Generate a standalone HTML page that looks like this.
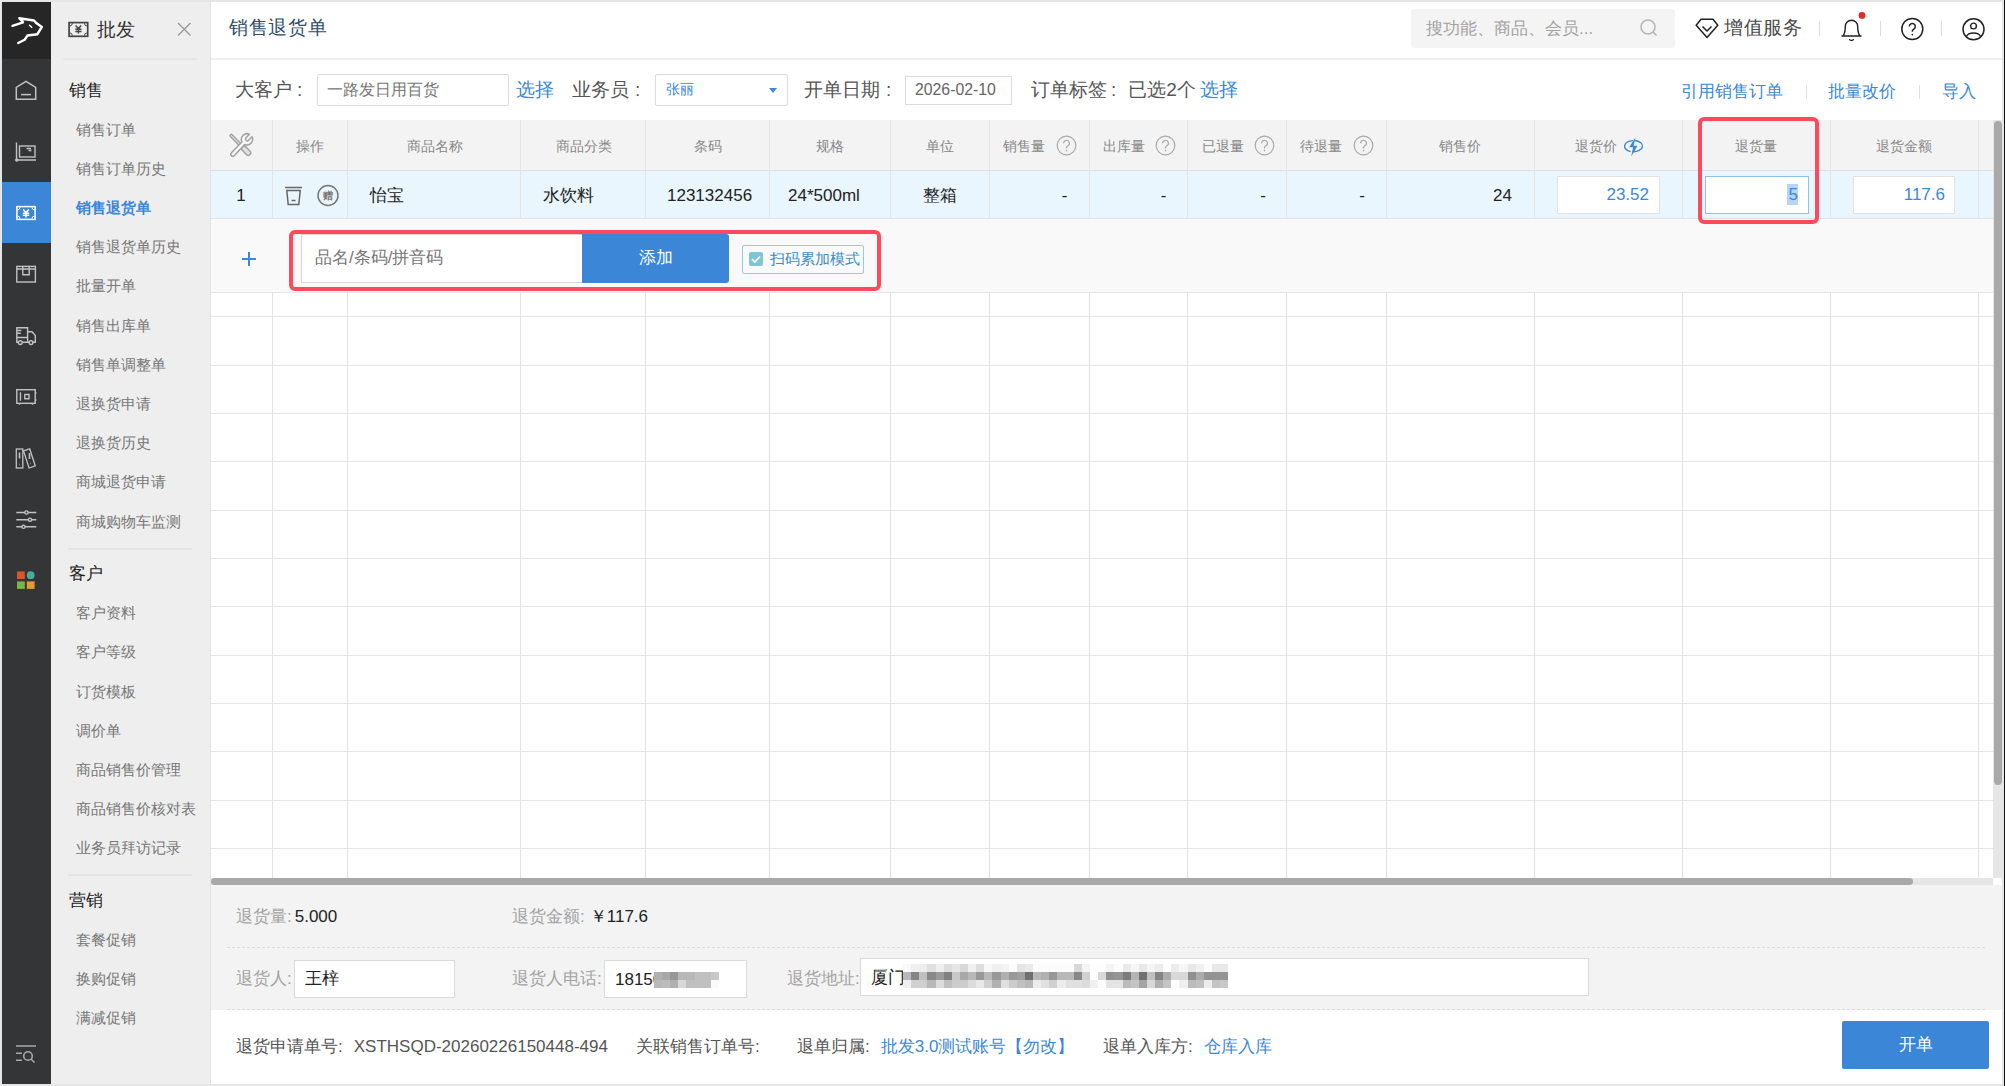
<!DOCTYPE html>
<html><head><meta charset="utf-8">
<style>
*{box-sizing:border-box;margin:0;padding:0}
html,body{width:2005px;height:1086px;overflow:hidden}
body{position:relative;background:#e6e6e6;font-family:"Liberation Sans",sans-serif;color:#333}
.a{position:absolute}
.t{position:absolute;white-space:nowrap;line-height:1}
#edge{left:2004px;top:0;width:1px;height:1086px;background:#111}
#nav{left:2px;top:2px;width:49px;height:1082px;background:#343537}
#logo{left:2px;top:2px;width:49px;height:57px;background:#272626}
#act{left:2px;top:182px;width:49px;height:61px;background:#3b86d6}
#side{left:51px;top:2px;width:160px;height:1082px;background:#eeeeee}
#main{left:211px;top:2px;width:1791px;height:1082px;background:#fff}
.sep{position:absolute;height:2px;background:#e3e3e3}
.s-h{font-size:17px;color:#222}
.s-i{font-size:14.5px;color:#777}
.hd{background:#f3f3f3}
.vl{position:absolute;width:1px;background:#e2e2e2}
.hl{position:absolute;height:1px;background:#e6e6e6}
.blue{color:#3b88d8}
i{position:absolute;display:block}
</style></head><body>
<div class="a" id="edge"></div>
<div class="a" id="nav"></div>
<div class="a" id="logo"></div>
<div class="a" id="act"></div>
<div class="a" id="side"></div>
<div class="a" id="main"></div>

<!-- secondary sidebar -->
<div class="t" style="left:97px;top:20px;font-size:19px;color:#333">批发</div>
<div class="sep" style="left:63px;top:58px;width:134px;height:1.5px;background:#e6e6e6"></div>
<div class="t s-h" style="left:69px;top:82px">销售</div>
<div class="t s-i" style="left:76px;top:123px">销售订单</div>
<div class="t s-i" style="left:76px;top:162px">销售订单历史</div>
<div class="t s-i" style="left:76px;top:201px;color:#3b88d8;font-weight:bold">销售退货单</div>
<div class="t s-i" style="left:76px;top:240px">销售退货单历史</div>
<div class="t s-i" style="left:76px;top:279px">批量开单</div>
<div class="t s-i" style="left:76px;top:319px">销售出库单</div>
<div class="t s-i" style="left:76px;top:358px">销售单调整单</div>
<div class="t s-i" style="left:76px;top:397px">退换货申请</div>
<div class="t s-i" style="left:76px;top:436px">退换货历史</div>
<div class="t s-i" style="left:76px;top:475px">商城退货申请</div>
<div class="t s-i" style="left:76px;top:515px">商城购物车监测</div>
<div class="sep" style="left:68px;top:548px;width:124px;height:1.5px"></div>
<div class="t s-h" style="left:69px;top:565px">客户</div>
<div class="t s-i" style="left:76px;top:606px">客户资料</div>
<div class="t s-i" style="left:76px;top:645px">客户等级</div>
<div class="t s-i" style="left:76px;top:685px">订货模板</div>
<div class="t s-i" style="left:76px;top:724px">调价单</div>
<div class="t s-i" style="left:76px;top:763px">商品销售价管理</div>
<div class="t s-i" style="left:76px;top:802px">商品销售价核对表</div>
<div class="t s-i" style="left:76px;top:841px">业务员拜访记录</div>
<div class="sep" style="left:68px;top:874px;width:124px;height:1.5px"></div>
<div class="t s-h" style="left:69px;top:892px">营销</div>
<div class="t s-i" style="left:76px;top:933px">套餐促销</div>
<div class="t s-i" style="left:76px;top:972px">换购促销</div>
<div class="t s-i" style="left:76px;top:1011px">满减促销</div>

<!-- header -->
<div class="t" style="left:229px;top:18px;font-size:19px;letter-spacing:0.7px;color:#2d4d6a">销售退货单</div>
<div class="hl" style="left:211px;top:58px;width:1791px;height:2px;background:#f0f0f0"></div><div class="a" style="left:210px;top:2px;width:1px;height:1082px;background:#e3e3e3"></div>


<div class="t" style="left:235px;top:80px;font-size:19px;color:#555">大客户<span style="margin-left:5px">:</span></div>
<div class="a" style="left:317px;top:74px;width:192px;height:32px;border:1px solid #dcdcdc;border-radius:2px;background:#fff"></div>
<div class="t" style="left:327px;top:82px;font-size:16px;color:#777">一路发日用百货</div>
<div class="t blue" style="left:516px;top:80px;font-size:19px">选择</div>
<div class="t" style="left:572px;top:80px;font-size:19px;color:#555">业务员<span style="margin-left:6px">:</span></div>
<div class="a" style="left:655px;top:74px;width:133px;height:32px;border:1px solid #dcdcdc;border-radius:2px;background:#fff"></div>
<div class="t blue" style="left:666px;top:82px;font-size:14px">张丽</div>
<div class="a" style="left:769px;top:88px;width:0;height:0;border-left:4.5px solid transparent;border-right:4.5px solid transparent;border-top:5px solid #3b88d8"></div>
<div class="t" style="left:804px;top:80px;font-size:19px;color:#555">开单日期<span style="margin-left:6px">:</span></div>
<div class="a" style="left:905px;top:76px;width:107px;height:29px;border:1px solid #dcdcdc;background:#fff"></div>
<div class="t" style="left:915px;top:82px;font-size:15.8px;color:#666">2026-02-10</div>
<div class="t" style="left:1031px;top:80px;font-size:19px;color:#555">订单标签<span style="margin-left:4px;margin-right:12px">:</span>已选2个</div>
<div class="t blue" style="left:1200px;top:80px;font-size:19px">选择</div>
<div class="t blue" style="left:1681px;top:83px;font-size:17px">引用销售订单</div>
<div class="a" style="left:1806px;top:85px;width:1px;height:14px;background:#e0e0e0"></div>
<div class="t blue" style="left:1828px;top:83px;font-size:17px">批量改价</div>
<div class="a" style="left:1919px;top:85px;width:1px;height:14px;background:#e0e0e0"></div>
<div class="t blue" style="left:1942px;top:83px;font-size:17px">导入</div>

<div class="a hd" style="left:211px;top:120px;width:1782px;height:50px"></div>
<div class="a" style="left:211px;top:170px;width:1782px;height:49px;background:#e9f6fd"></div>
<div class="a" style="left:211px;top:219px;width:1782px;height:73px;background:#f9f9f9"></div>
<div class="hl" style="left:211px;top:170px;width:1782px;background:#e0e0e0"></div>
<div class="hl" style="left:211px;top:218px;width:1782px;background:#e2e2e2"></div>
<div class="hl" style="left:211px;top:292px;width:1782px;background:#e6e6e6"></div>
<div class="hl" style="left:211px;top:316px;width:1782px"></div>
<div class="hl" style="left:211px;top:365px;width:1782px"></div>
<div class="hl" style="left:211px;top:413px;width:1782px"></div>
<div class="hl" style="left:211px;top:461px;width:1782px"></div>
<div class="hl" style="left:211px;top:510px;width:1782px"></div>
<div class="hl" style="left:211px;top:558px;width:1782px"></div>
<div class="hl" style="left:211px;top:606px;width:1782px"></div>
<div class="hl" style="left:211px;top:655px;width:1782px"></div>
<div class="hl" style="left:211px;top:703px;width:1782px"></div>
<div class="hl" style="left:211px;top:751px;width:1782px"></div>
<div class="hl" style="left:211px;top:800px;width:1782px"></div>
<div class="hl" style="left:211px;top:848px;width:1782px"></div>
<div class="vl" style="left:272px;top:120px;height:99px;background:#e5e5e5"></div>
<div class="vl" style="left:272px;top:292px;height:586px"></div>
<div class="vl" style="left:347px;top:120px;height:99px;background:#e5e5e5"></div>
<div class="vl" style="left:347px;top:292px;height:586px"></div>
<div class="vl" style="left:520px;top:120px;height:99px;background:#e5e5e5"></div>
<div class="vl" style="left:520px;top:292px;height:586px"></div>
<div class="vl" style="left:645px;top:120px;height:99px;background:#e5e5e5"></div>
<div class="vl" style="left:645px;top:292px;height:586px"></div>
<div class="vl" style="left:769px;top:120px;height:99px;background:#e5e5e5"></div>
<div class="vl" style="left:769px;top:292px;height:586px"></div>
<div class="vl" style="left:890px;top:120px;height:99px;background:#e5e5e5"></div>
<div class="vl" style="left:890px;top:292px;height:586px"></div>
<div class="vl" style="left:989px;top:120px;height:99px;background:#e5e5e5"></div>
<div class="vl" style="left:989px;top:292px;height:586px"></div>
<div class="vl" style="left:1089px;top:120px;height:99px;background:#e5e5e5"></div>
<div class="vl" style="left:1089px;top:292px;height:586px"></div>
<div class="vl" style="left:1187px;top:120px;height:99px;background:#e5e5e5"></div>
<div class="vl" style="left:1187px;top:292px;height:586px"></div>
<div class="vl" style="left:1286px;top:120px;height:99px;background:#e5e5e5"></div>
<div class="vl" style="left:1286px;top:292px;height:586px"></div>
<div class="vl" style="left:1386px;top:120px;height:99px;background:#e5e5e5"></div>
<div class="vl" style="left:1386px;top:292px;height:586px"></div>
<div class="vl" style="left:1534px;top:120px;height:99px;background:#e5e5e5"></div>
<div class="vl" style="left:1534px;top:292px;height:586px"></div>
<div class="vl" style="left:1682px;top:120px;height:99px;background:#e5e5e5"></div>
<div class="vl" style="left:1682px;top:292px;height:586px"></div>
<div class="vl" style="left:1830px;top:120px;height:99px;background:#e5e5e5"></div>
<div class="vl" style="left:1830px;top:292px;height:586px"></div>
<div class="vl" style="left:1978px;top:120px;height:99px;background:#e5e5e5"></div>
<div class="vl" style="left:1978px;top:292px;height:586px"></div>
<div class="t" style="left:210.0px;width:200px;text-align:center;font-size:14px;color:#888;top:139px">操作</div>
<div class="t" style="left:334.5px;width:200px;text-align:center;font-size:14px;color:#888;top:139px">商品名称</div>
<div class="t" style="left:483.5px;width:200px;text-align:center;font-size:14px;color:#888;top:139px">商品分类</div>
<div class="t" style="left:608.0px;width:200px;text-align:center;font-size:14px;color:#888;top:139px">条码</div>
<div class="t" style="left:730.0px;width:200px;text-align:center;font-size:14px;color:#888;top:139px">规格</div>
<div class="t" style="left:840.0px;width:200px;text-align:center;font-size:14px;color:#888;top:139px">单位</div>
<div class="t" style="left:1360.0px;width:200px;text-align:center;font-size:14px;color:#888;top:139px">销售价</div>
<div class="t" style="left:1656.0px;width:200px;text-align:center;font-size:14px;color:#888;top:139px">退货量</div>
<div class="t" style="left:1804.0px;width:200px;text-align:center;font-size:14px;color:#888;top:139px">退货金额</div>
<div class="t" style="left:1003px;font-size:14px;color:#888;top:139px">销售量</div>
<svg class="a" style="left:1056px;top:135px" width="21" height="21" viewBox="0 0 21 21"><circle cx="10.5" cy="10.5" r="9.3" fill="none" stroke="#aaa" stroke-width="1.2"/><path d="M7.6 8.2a2.9 2.9 0 1 1 4.3 2.5c-.9.5-1.4 1-1.4 2v.9" fill="none" stroke="#aaa" stroke-width="1.2"/><circle cx="10.5" cy="15.6" r=".8" fill="#aaa"/></svg>
<div class="t" style="left:1102.7px;font-size:14px;color:#888;top:139px">出库量</div>
<svg class="a" style="left:1155px;top:135px" width="21" height="21" viewBox="0 0 21 21"><circle cx="10.5" cy="10.5" r="9.3" fill="none" stroke="#aaa" stroke-width="1.2"/><path d="M7.6 8.2a2.9 2.9 0 1 1 4.3 2.5c-.9.5-1.4 1-1.4 2v.9" fill="none" stroke="#aaa" stroke-width="1.2"/><circle cx="10.5" cy="15.6" r=".8" fill="#aaa"/></svg>
<div class="t" style="left:1201.5px;font-size:14px;color:#888;top:139px">已退量</div>
<svg class="a" style="left:1254px;top:135px" width="21" height="21" viewBox="0 0 21 21"><circle cx="10.5" cy="10.5" r="9.3" fill="none" stroke="#aaa" stroke-width="1.2"/><path d="M7.6 8.2a2.9 2.9 0 1 1 4.3 2.5c-.9.5-1.4 1-1.4 2v.9" fill="none" stroke="#aaa" stroke-width="1.2"/><circle cx="10.5" cy="15.6" r=".8" fill="#aaa"/></svg>
<div class="t" style="left:1300px;font-size:14px;color:#888;top:139px">待退量</div>
<svg class="a" style="left:1353px;top:135px" width="21" height="21" viewBox="0 0 21 21"><circle cx="10.5" cy="10.5" r="9.3" fill="none" stroke="#aaa" stroke-width="1.2"/><path d="M7.6 8.2a2.9 2.9 0 1 1 4.3 2.5c-.9.5-1.4 1-1.4 2v.9" fill="none" stroke="#aaa" stroke-width="1.2"/><circle cx="10.5" cy="15.6" r=".8" fill="#aaa"/></svg>
<div class="t" style="left:1575px;font-size:14px;color:#888;top:139px">退货价</div>
<svg class="a" style="left:1621px;top:136px" width="24" height="22" viewBox="0 0 24 22"><path d="M12.2 4.6A9.4 5.7 0 0 0 9.6 15.6M13.8 4.5A9.4 5.7 0 0 1 11.6 15.8" fill="none" stroke="#3b88d8" stroke-width="1.4"/><path d="M14.6 1.3 8.2 11.3h3.9L10.2 20.6 16.5 9.8h-3.9z" fill="#3b88d8"/></svg>
<svg class="a" style="left:222px;top:126px" width="40" height="40" viewBox="0 0 40 40"><g stroke="#a3a3a3" stroke-width="1.5" stroke-linejoin="round"><g transform="translate(9.3 9.6) rotate(45.6)"><path d="M0 -1.2L16 -1.2L16 1.2L0 1.2A1.2 1.2 0 0 1 0 -1.2Z" fill="#e6e6e6"/><rect x="16" y="-2.5" width="10.6" height="5" rx="2.5" fill="#e2e2e2"/></g><g transform="translate(10.7 28.4) rotate(-46.5)"><path d="M0 -1.9L15.53 -1.9A5.6 5.6 0 0 1 26.1 -1.8L21.2 -1.8A1.8 1.8 0 0 0 21.2 1.8L26.1 1.8A5.6 5.6 0 0 1 15.53 1.9L0 1.9A1.9 1.9 0 0 1 0 -1.9Z" fill="#f8f8f8"/></g></g></svg>
<div class="t" style="left:141.0px;width:200px;text-align:center;font-size:17px;color:#222;top:187px">1</div>
<div class="t" style="left:370px;font-size:17px;color:#222;top:187px">怡宝</div>
<div class="t" style="left:543px;font-size:17px;color:#222;top:187px">水饮料</div>
<div class="t" style="left:667px;font-size:17px;color:#222;top:187px">123132456</div>
<div class="t" style="left:788px;font-size:17px;color:#222;top:187px">24*500ml</div>
<div class="t" style="left:923px;font-size:17px;color:#222;top:187px">整箱</div>
<div class="t" style="left:1054.5px;width:20px;text-align:center;font-size:17px;color:#222;top:187px">-</div>
<div class="t" style="left:1153.5px;width:20px;text-align:center;font-size:17px;color:#222;top:187px">-</div>
<div class="t" style="left:1253.0px;width:20px;text-align:center;font-size:17px;color:#222;top:187px">-</div>
<div class="t" style="left:1352.0px;width:20px;text-align:center;font-size:17px;color:#222;top:187px">-</div>
<div class="t" style="left:1412px;width:100px;text-align:right;font-size:17px;color:#222;top:187px">24</div>
<svg class="a" style="left:284px;top:186px" width="19" height="20" viewBox="0 0 19 20"><g fill="none" stroke="#666" stroke-width="1.5"><path d="M1 1.5h17"/><path d="M2.8 4.5l1.4 14h10.6l1.4-14z"/><path d="M7.5 14.5h4"/></g></svg>
<svg class="a" style="left:317px;top:184px" width="22" height="23" viewBox="0 0 22 23"><circle cx="11" cy="11.5" r="10" fill="none" stroke="#777" stroke-width="1.5"/></svg>
<div class="t" style="left:323px;top:191px;font-size:10px;font-weight:bold;color:#7a7a7a">赠</div>
<div class="a" style="left:1556.5px;top:176px;width:103.0px;height:38px;background:#fff;border:1px solid #e2e2e2;"></div>
<div class="t" style="left:1548px;width:101px;text-align:right;font-size:17px;color:#3b88d8;top:186px">23.52</div>
<div class="a" style="left:1705px;top:176px;width:103.5px;height:38px;background:#fff;border:1px solid #e2e2e2;border-color:#8cc3ec"></div>
<div class="a" style="left:1787px;top:184px;width:11px;height:21px;background:#b4d5fc"></div>
<div class="t" style="left:1698px;width:100px;text-align:right;font-size:17px;color:#3b88d8;top:186px">5</div>
<div class="a" style="left:1853px;top:176px;width:102px;height:38px;background:#fff;border:1px solid #e2e2e2;"></div>
<div class="t" style="left:1845px;width:100px;text-align:right;font-size:17px;color:#3b88d8;top:186px">117.6</div>
<div class="a" style="left:1698px;top:117px;width:121px;height:107px;border:4px solid #ff4a5e;border-radius:6px"></div>
<div class="a" style="left:289px;top:230px;width:592px;height:61px;border:4px solid #ff4a5e;border-radius:6px"></div>
<div class="t" style="left:242px;top:252px;width:14px;height:14px"><div class="a" style="left:0;top:6px;width:14px;height:2px;background:#3b88d8"></div><div class="a" style="left:6px;top:0;width:2px;height:14px;background:#3b88d8"></div></div>
<div class="a" style="left:301px;top:234px;width:282px;height:49px;background:#fff;border:1px solid #d6d6d6;border-right:none"></div>
<div class="t" style="left:315px;top:249px;font-size:17px;color:#777">品名/条码/拼音码</div>
<div class="a" style="left:582px;top:234px;width:147px;height:49px;background:#3b86d6;border-radius:0 3px 3px 0"></div>
<div class="t" style="left:556.0px;width:200px;text-align:center;font-size:17px;color:#fff;top:249px">添加</div>
<div class="a" style="left:742px;top:245px;width:122px;height:29px;border:1px solid #92cde0;background:#fafafa;border-radius:2px"></div>
<div class="a" style="left:749px;top:252px;width:14px;height:14px;background:#7cc6d8;border-radius:2px"></div>
<svg class="a" style="left:749px;top:252px" width="14" height="14" viewBox="0 0 14 14"><path d="M3 7.2l2.8 2.8L11 4.5" fill="none" stroke="#fff" stroke-width="1.8"/></svg>
<div class="t" style="left:770px;top:252px;font-size:14.5px;color:#3a8dc2">扫码累加模式</div>
<div class="a" style="left:211px;top:878px;width:1782px;height:7px;background:#e6e6e6"></div>
<div class="a" style="left:211px;top:878px;width:1702px;height:7px;background:#a9a9a9;border-radius:3.5px"></div>
<div class="a" style="left:1993px;top:120px;width:9px;height:758px;background:#e6e6e6"></div>
<div class="a" style="left:1993.5px;top:121px;width:8px;height:664px;background:#a9a9a9;border-radius:4px"></div>
<div class="a" style="left:1993px;top:878px;width:9px;height:7px;background:#fff"></div>
<div class="a" style="left:211px;top:885px;width:1791px;height:125px;background:#f3f3f3"></div>
<div class="a" style="left:227px;top:947px;width:1758px;height:0;border-top:1px dashed #dcdcdc"></div>
<div class="a" style="left:227px;top:1009px;width:1758px;height:0;border-top:1px dashed #dcdcdc"></div>
<div class="t" style="left:236px;top:908px;font-size:17px;color:#a3a3a3">退货量:<span style="font-size:17px;color:#222;margin-left:3px">5.000</span></div>
<div class="t" style="left:512px;top:908px;font-size:17px;color:#a3a3a3">退货金额:<span style="font-size:17px;color:#222;margin-left:5px">￥117.6</span></div>
<div class="t" style="left:236px;top:970px;font-size:17px;color:#a3a3a3">退货人:</div>
<div class="a" style="left:294px;top:960px;width:161px;height:38px;background:#fff;border:1px solid #dadada"></div>
<div class="t" style="left:305px;top:970px;font-size:17px;color:#222">王梓</div>
<div class="t" style="left:512px;top:970px;font-size:17px;color:#a3a3a3">退货人电话:</div>
<div class="a" style="left:604px;top:960px;width:143px;height:38px;background:#fff;border:1px solid #dadada"></div>
<div class="t" style="left:615px;top:971px;font-size:17px;color:#222">18150</div><div class="a" style="left:0;top:0"><i style="left:654.00px;top:972px;width:8.40px;height:8px;background:#b0b0b0"></i><i style="left:662.10px;top:972px;width:8.40px;height:8px;background:#a8a8a8"></i><i style="left:670.20px;top:972px;width:8.40px;height:8px;background:#989898"></i><i style="left:678.30px;top:972px;width:8.40px;height:8px;background:#b8b8b8"></i><i style="left:686.40px;top:972px;width:8.40px;height:8px;background:#b8b8b8"></i><i style="left:694.50px;top:972px;width:8.40px;height:8px;background:#c0c0c0"></i><i style="left:702.60px;top:972px;width:8.40px;height:8px;background:#c0c0c0"></i><i style="left:710.70px;top:972px;width:8.40px;height:8px;background:#c8c8c8"></i><i style="left:654.00px;top:980px;width:8.40px;height:8px;background:#b8b8b8"></i><i style="left:662.10px;top:980px;width:8.40px;height:8px;background:#bcbcbc"></i><i style="left:670.20px;top:980px;width:8.40px;height:8px;background:#b0b0b0"></i><i style="left:678.30px;top:980px;width:8.40px;height:8px;background:#d8d8d8"></i><i style="left:686.40px;top:980px;width:8.40px;height:8px;background:#c0c0c0"></i><i style="left:694.50px;top:980px;width:8.40px;height:8px;background:#c0c0c0"></i><i style="left:702.60px;top:980px;width:8.40px;height:8px;background:#c0c0c0"></i><i style="left:710.70px;top:980px;width:8.40px;height:8px;background:#fafafa"></i></div>
<div class="t" style="left:787px;top:970px;font-size:17px;color:#a3a3a3">退货地址:</div>
<div class="a" style="left:860px;top:958px;width:729px;height:38px;background:#fff;border:1px solid #dadada"></div>
<div class="t" style="left:871px;top:969px;font-size:17px;color:#222">厦门</div><div class="a" style="left:0;top:0"><i style="left:903.00px;top:964px;width:8.43px;height:8px;background:#fafafa"></i><i style="left:911.13px;top:964px;width:8.43px;height:8px;background:#f0f0f0"></i><i style="left:919.26px;top:964px;width:8.43px;height:8px;background:#eeeeee"></i><i style="left:927.39px;top:964px;width:8.43px;height:8px;background:#e0e0e0"></i><i style="left:935.52px;top:964px;width:8.43px;height:8px;background:#eeeeee"></i><i style="left:943.65px;top:964px;width:8.43px;height:8px;background:#dddddd"></i><i style="left:951.78px;top:964px;width:8.43px;height:8px;background:#e6e6e6"></i><i style="left:959.91px;top:964px;width:8.43px;height:8px;background:#d8d8d8"></i><i style="left:968.04px;top:964px;width:8.43px;height:8px;background:#f0f0f0"></i><i style="left:976.17px;top:964px;width:8.43px;height:8px;background:#dddddd"></i><i style="left:984.30px;top:964px;width:8.43px;height:8px;background:#f8f8f8"></i><i style="left:992.43px;top:964px;width:8.43px;height:8px;background:#f0f0f0"></i><i style="left:1000.56px;top:964px;width:8.43px;height:8px;background:#f4f4f4"></i><i style="left:1008.69px;top:964px;width:8.43px;height:8px;background:#fcfcfc"></i><i style="left:1016.82px;top:964px;width:8.43px;height:8px;background:#e5e5e5"></i><i style="left:1024.95px;top:964px;width:8.43px;height:8px;background:#eaeaea"></i><i style="left:1033.08px;top:964px;width:8.43px;height:8px;background:#fcfcfc"></i><i style="left:1041.21px;top:964px;width:8.43px;height:8px;background:#fcfcfc"></i><i style="left:1049.34px;top:964px;width:8.43px;height:8px;background:#fcfcfc"></i><i style="left:1057.47px;top:964px;width:8.43px;height:8px;background:#fcfcfc"></i><i style="left:1065.60px;top:964px;width:8.43px;height:8px;background:#fcfcfc"></i><i style="left:1073.73px;top:964px;width:8.43px;height:8px;background:#d8d8d8"></i><i style="left:1081.86px;top:964px;width:8.43px;height:8px;background:#f4f4f4"></i><i style="left:1089.99px;top:964px;width:8.43px;height:8px;background:#fefefe"></i><i style="left:1098.12px;top:964px;width:8.43px;height:8px;background:#fefefe"></i><i style="left:1106.25px;top:964px;width:8.43px;height:8px;background:#f4f4f4"></i><i style="left:1114.38px;top:964px;width:8.43px;height:8px;background:#fcfcfc"></i><i style="left:1122.51px;top:964px;width:8.43px;height:8px;background:#eaeaea"></i><i style="left:1130.64px;top:964px;width:8.43px;height:8px;background:#f6f6f6"></i><i style="left:1138.77px;top:964px;width:8.43px;height:8px;background:#e8e8e8"></i><i style="left:1146.90px;top:964px;width:8.43px;height:8px;background:#f4f4f4"></i><i style="left:1155.03px;top:964px;width:8.43px;height:8px;background:#ececec"></i><i style="left:1163.16px;top:964px;width:8.43px;height:8px;background:#fefefe"></i><i style="left:1171.29px;top:964px;width:8.43px;height:8px;background:#ececec"></i><i style="left:1179.42px;top:964px;width:8.43px;height:8px;background:#f6f6f6"></i><i style="left:1187.55px;top:964px;width:8.43px;height:8px;background:#e8e8e8"></i><i style="left:1195.68px;top:964px;width:8.43px;height:8px;background:#f0f0f0"></i><i style="left:1203.81px;top:964px;width:8.43px;height:8px;background:#fcfcfc"></i><i style="left:1211.94px;top:964px;width:8.43px;height:8px;background:#e8e8e8"></i><i style="left:1220.07px;top:964px;width:8.43px;height:8px;background:#e8e8e8"></i><i style="left:903.00px;top:972px;width:8.43px;height:8px;background:#b8b8b8"></i><i style="left:911.13px;top:972px;width:8.43px;height:8px;background:#858585"></i><i style="left:919.26px;top:972px;width:8.43px;height:8px;background:#c0c0c0"></i><i style="left:927.39px;top:972px;width:8.43px;height:8px;background:#888888"></i><i style="left:935.52px;top:972px;width:8.43px;height:8px;background:#9a9a9a"></i><i style="left:943.65px;top:972px;width:8.43px;height:8px;background:#808080"></i><i style="left:951.78px;top:972px;width:8.43px;height:8px;background:#c8c8c8"></i><i style="left:959.91px;top:972px;width:8.43px;height:8px;background:#a8a8a8"></i><i style="left:968.04px;top:972px;width:8.43px;height:8px;background:#b8b8b8"></i><i style="left:976.17px;top:972px;width:8.43px;height:8px;background:#989898"></i><i style="left:984.30px;top:972px;width:8.43px;height:8px;background:#b8b8b8"></i><i style="left:992.43px;top:972px;width:8.43px;height:8px;background:#989898"></i><i style="left:1000.56px;top:972px;width:8.43px;height:8px;background:#b0b0b0"></i><i style="left:1008.69px;top:972px;width:8.43px;height:8px;background:#9a9a9a"></i><i style="left:1016.82px;top:972px;width:8.43px;height:8px;background:#a0a0a0"></i><i style="left:1024.95px;top:972px;width:8.43px;height:8px;background:#707070"></i><i style="left:1033.08px;top:972px;width:8.43px;height:8px;background:#b8b8b8"></i><i style="left:1041.21px;top:972px;width:8.43px;height:8px;background:#b0b0b0"></i><i style="left:1049.34px;top:972px;width:8.43px;height:8px;background:#989898"></i><i style="left:1057.47px;top:972px;width:8.43px;height:8px;background:#b8b8b8"></i><i style="left:1065.60px;top:972px;width:8.43px;height:8px;background:#b8b8b8"></i><i style="left:1073.73px;top:972px;width:8.43px;height:8px;background:#888888"></i><i style="left:1081.86px;top:972px;width:8.43px;height:8px;background:#d0d0d0"></i><i style="left:1089.99px;top:972px;width:8.43px;height:8px;background:#fefefe"></i><i style="left:1098.12px;top:972px;width:8.43px;height:8px;background:#d8d8d8"></i><i style="left:1106.25px;top:972px;width:8.43px;height:8px;background:#909090"></i><i style="left:1114.38px;top:972px;width:8.43px;height:8px;background:#949494"></i><i style="left:1122.51px;top:972px;width:8.43px;height:8px;background:#7c7c7c"></i><i style="left:1130.64px;top:972px;width:8.43px;height:8px;background:#b4b4b4"></i><i style="left:1138.77px;top:972px;width:8.43px;height:8px;background:#707070"></i><i style="left:1146.90px;top:972px;width:8.43px;height:8px;background:#c0c0c0"></i><i style="left:1155.03px;top:972px;width:8.43px;height:8px;background:#848484"></i><i style="left:1163.16px;top:972px;width:8.43px;height:8px;background:#acacac"></i><i style="left:1171.29px;top:972px;width:8.43px;height:8px;background:#d8d8d8"></i><i style="left:1179.42px;top:972px;width:8.43px;height:8px;background:#d8d8d8"></i><i style="left:1187.55px;top:972px;width:8.43px;height:8px;background:#909090"></i><i style="left:1195.68px;top:972px;width:8.43px;height:8px;background:#acacac"></i><i style="left:1203.81px;top:972px;width:8.43px;height:8px;background:#949494"></i><i style="left:1211.94px;top:972px;width:8.43px;height:8px;background:#949494"></i><i style="left:1220.07px;top:972px;width:8.43px;height:8px;background:#949494"></i><i style="left:903.00px;top:980px;width:8.43px;height:8px;background:#f0f0f0"></i><i style="left:911.13px;top:980px;width:8.43px;height:8px;background:#d0d0d0"></i><i style="left:919.26px;top:980px;width:8.43px;height:8px;background:#d0d0d0"></i><i style="left:927.39px;top:980px;width:8.43px;height:8px;background:#b8b8b8"></i><i style="left:935.52px;top:980px;width:8.43px;height:8px;background:#dcdcdc"></i><i style="left:943.65px;top:980px;width:8.43px;height:8px;background:#c0c0c0"></i><i style="left:951.78px;top:980px;width:8.43px;height:8px;background:#cccccc"></i><i style="left:959.91px;top:980px;width:8.43px;height:8px;background:#cccccc"></i><i style="left:968.04px;top:980px;width:8.43px;height:8px;background:#dcdcdc"></i><i style="left:976.17px;top:980px;width:8.43px;height:8px;background:#e8e8e8"></i><i style="left:984.30px;top:980px;width:8.43px;height:8px;background:#d0d0d0"></i><i style="left:992.43px;top:980px;width:8.43px;height:8px;background:#b0b0b0"></i><i style="left:1000.56px;top:980px;width:8.43px;height:8px;background:#e0e0e0"></i><i style="left:1008.69px;top:980px;width:8.43px;height:8px;background:#cccccc"></i><i style="left:1016.82px;top:980px;width:8.43px;height:8px;background:#c0c0c0"></i><i style="left:1024.95px;top:980px;width:8.43px;height:8px;background:#b8b8b8"></i><i style="left:1033.08px;top:980px;width:8.43px;height:8px;background:#ececec"></i><i style="left:1041.21px;top:980px;width:8.43px;height:8px;background:#e0e0e0"></i><i style="left:1049.34px;top:980px;width:8.43px;height:8px;background:#d0d0d0"></i><i style="left:1057.47px;top:980px;width:8.43px;height:8px;background:#ececec"></i><i style="left:1065.60px;top:980px;width:8.43px;height:8px;background:#e0e0e0"></i><i style="left:1073.73px;top:980px;width:8.43px;height:8px;background:#e0e0e0"></i><i style="left:1081.86px;top:980px;width:8.43px;height:8px;background:#dcdcdc"></i><i style="left:1089.99px;top:980px;width:8.43px;height:8px;background:#f0f0f0"></i><i style="left:1098.12px;top:980px;width:8.43px;height:8px;background:#fcfcfc"></i><i style="left:1106.25px;top:980px;width:8.43px;height:8px;background:#e4e4e4"></i><i style="left:1114.38px;top:980px;width:8.43px;height:8px;background:#e4e4e4"></i><i style="left:1122.51px;top:980px;width:8.43px;height:8px;background:#bcbcbc"></i><i style="left:1130.64px;top:980px;width:8.43px;height:8px;background:#c4c4c4"></i><i style="left:1138.77px;top:980px;width:8.43px;height:8px;background:#a4a4a4"></i><i style="left:1146.90px;top:980px;width:8.43px;height:8px;background:#d8d8d8"></i><i style="left:1155.03px;top:980px;width:8.43px;height:8px;background:#b0b0b0"></i><i style="left:1163.16px;top:980px;width:8.43px;height:8px;background:#c4c4c4"></i><i style="left:1171.29px;top:980px;width:8.43px;height:8px;background:#fefefe"></i><i style="left:1179.42px;top:980px;width:8.43px;height:8px;background:#f0f0f0"></i><i style="left:1187.55px;top:980px;width:8.43px;height:8px;background:#bcbcbc"></i><i style="left:1195.68px;top:980px;width:8.43px;height:8px;background:#c0c0c0"></i><i style="left:1203.81px;top:980px;width:8.43px;height:8px;background:#ececec"></i><i style="left:1211.94px;top:980px;width:8.43px;height:8px;background:#c4c4c4"></i><i style="left:1220.07px;top:980px;width:8.43px;height:8px;background:#c8c8c8"></i></div>
<div class="t" style="left:236px;font-size:17px;color:#555;top:1038px">退货申请单号:<span style="margin-left:11px"></span>XSTHSQD-20260226150448-494</div>
<div class="t" style="left:636px;font-size:17px;color:#555;top:1038px">关联销售订单号:</div>
<div class="t" style="left:797px;font-size:17px;color:#555;top:1038px">退单归属:<span style="margin-left:11px"></span><span style="color:#3b88d8">批发3.0测试账号【勿改】</span></div>
<div class="t" style="left:1103px;font-size:17px;color:#555;top:1038px">退单入库方:<span style="margin-left:11px"></span><span style="color:#3b88d8">仓库入库</span></div>
<div class="a" style="left:1842px;top:1021px;width:147px;height:48px;background:#3b86d6;border-radius:2px"></div>
<div class="t" style="left:1842px;width:147px;text-align:center;top:1036px;font-size:17px;color:#fff">开单</div>
<div class="a" style="left:1411px;top:9px;width:264px;height:39px;background:#f4f4f4;border-radius:3px"></div>
<div class="t" style="left:1426px;top:20px;font-size:17px;color:#a3a3a3">搜功能、商品、会员...</div>
<svg class="a" style="left:1639px;top:18px" width="20" height="20" viewBox="0 0 20 20"><circle cx="9" cy="9" r="7" fill="none" stroke="#b5b5b5" stroke-width="1.6"/><path d="M14 14l3.5 3.5" stroke="#b5b5b5" stroke-width="1.6"/></svg>
<svg class="a" style="left:1695px;top:18px" width="24" height="21" viewBox="0 0 24 21"><path d="M6 1.2h12l4.8 6L12 19.5 1.2 7.2z" fill="none" stroke="#222" stroke-width="1.5" stroke-linejoin="round"/><path d="M7.5 8.5 12 13l4.5-4.5" fill="none" stroke="#222" stroke-width="1.5"/></svg>
<div class="t" style="left:1724px;top:18px;font-size:19px;letter-spacing:0.5px;color:#4a4a4a">增值服务</div>
<div class="a" style="left:1819px;top:21px;width:1px;height:15px;background:#dcdcdc"></div>
<div class="a" style="left:1880px;top:21px;width:1px;height:15px;background:#dcdcdc"></div>
<div class="a" style="left:1941px;top:21px;width:1px;height:15px;background:#dcdcdc"></div>
<svg class="a" style="left:1838px;top:10px" width="30" height="32" viewBox="0 0 30 32"><path d="M3.5 26h20M5 26c1.8-2.2 2.3-4.5 2.3-9.5a6.2 6.2 0 0 1 12.4 0c0 5 .5 7.3 2.3 9.5" fill="none" stroke="#222" stroke-width="1.4" stroke-linejoin="round"/><path d="M11.5 29a2 1.5 0 0 0 4 0" fill="none" stroke="#222" stroke-width="1.3"/><circle cx="24" cy="5.4" r="3.4" fill="#e02b2b"/></svg>
<svg class="a" style="left:1900px;top:17px" width="25" height="25" viewBox="0 0 25 25"><circle cx="12.3" cy="12" r="10.5" fill="none" stroke="#222" stroke-width="1.5"/><path d="M9.3 9.5a3 3 0 1 1 4.5 2.6c-1 .6-1.5 1.1-1.5 2.2v.5" fill="none" stroke="#222" stroke-width="1.5"/><circle cx="12.3" cy="17.6" r=".9" fill="#222"/></svg>
<svg class="a" style="left:1961px;top:17px" width="25" height="25" viewBox="0 0 25 25"><circle cx="12.5" cy="12.3" r="10.5" fill="none" stroke="#222" stroke-width="1.5"/><circle cx="12.5" cy="9" r="2.9" fill="none" stroke="#222" stroke-width="1.4"/><path d="M5.3 19.8c1-2.5 3.8-3.8 7.2-3.8s6.2 1.3 7.2 3.8" fill="none" stroke="#222" stroke-width="1.5"/></svg>

<svg class="a" style="left:1px;top:1px" width="51" height="59" viewBox="0 0 51 59"><path d="M11.5 24.8 L22 21.3 L18.3 17.2 L33 19.5 L35 21.8 L40.8 26 L36.4 33.2 L26.5 34.5 L23.6 38.8 L17.2 42" fill="none" stroke="#fff" stroke-width="2.4" stroke-linejoin="round" stroke-linecap="round"/><path d="M28.5 24.3l2.2 2" stroke="#fff" stroke-width="1.5" stroke-linecap="round"/></svg>
<svg class="a" style="left:2px;top:60px" width="49" height="61" viewBox="0 0 49 61"><g fill="none" stroke="#c2c2c2" stroke-width="1.5"><path d="M14.3 39.3V27.3L24 21.3L33.7 27.3V39.3z"/><path d="M19 34.6h10"/></g></svg>
<svg class="a" style="left:2px;top:121px" width="49" height="61" viewBox="0 0 49 61"><g fill="none" stroke="#c2c2c2" stroke-width="1.4"><path d="M14.5 21.5v17.5h19.5"/><rect x="17.5" y="25" width="15.5" height="11"/><path d="M24.5 27.5h4.5M26.5 29.5h3"/><circle cx="14.8" cy="39" r="1"/></g></svg>
<svg class="a" style="left:2px;top:182px" width="49" height="61" viewBox="0 0 49 61"><rect x="14.9" y="24.6" width="18.2" height="12.8" fill="none" stroke="#fff" stroke-width="1.5"/><g fill="none" stroke="#fff" stroke-width="1"><path d="M18 25.2a2.8 2.8 0 0 1-2.8 2.8"/><path d="M30 25.2a2.8 2.8 0 0 0 2.8 2.8"/><path d="M18 36.8a2.8 2.8 0 0 0-2.8-2.8"/><path d="M30 36.8a2.8 2.8 0 0 1 2.8-2.8"/></g><path d="M21.2 27.6l2.8 3 2.8-3M24 30.6v4.8M20.8 31.2h6.4M20.8 33.2h6.4" fill="none" stroke="#fff" stroke-width="1.5"/></svg>
<svg class="a" style="left:2px;top:243px" width="49" height="61" viewBox="0 0 49 61"><g fill="none" stroke="#c2c2c2" stroke-width="1.4"><rect x="14.8" y="23.4" width="18.6" height="15.6"/><path d="M14.8 26h18.6M20.8 23.4v8.3h6.4V23.4"/></g></svg>
<svg class="a" style="left:2px;top:304px" width="49" height="61" viewBox="0 0 49 61"><g fill="none" stroke="#c2c2c2" stroke-width="1.4"><path d="M16.3 38.3h-1.5V23.7h10.8v14.6M25.6 27.8h4.4l3.3 3.7v6.8h-2.3M20.3 38.3h6.7"/><path d="M14.8 26.5h4.5M14.8 29.3h4M14.8 33.5h10.8"/><circle cx="18.3" cy="38.6" r="1.9"/><circle cx="29" cy="38.6" r="1.9"/></g></svg>
<svg class="a" style="left:2px;top:365px" width="49" height="61" viewBox="0 0 49 61"><g fill="none" stroke="#c2c2c2" stroke-width="1.4"><rect x="14.8" y="24.7" width="18.4" height="13.6"/><path d="M18.5 27.3v8.4M22.8 29.5h4.2v4.2h-4.2zM33.2 28h1.3M33.2 35h1.3M17.5 38.3v1.4M30.5 38.3v1.4"/></g></svg>
<svg class="a" style="left:2px;top:426px" width="49" height="61" viewBox="0 0 49 61"><g fill="none" stroke="#c2c2c2" stroke-width="1.3"><rect x="14.3" y="23" width="6.5" height="19"/><rect x="24" y="23.5" width="6.5" height="18" transform="rotate(-18 27 32)"/><path d="M17.5 26.5v6M27.5 27v6" stroke-width="1.6"/><path d="M17.5 38.5h.5M28.5 37.5h.5"/></g></svg>
<svg class="a" style="left:2px;top:487px" width="49" height="61" viewBox="0 0 49 61"><g fill="none" stroke="#c2c2c2" stroke-width="1.4"><path d="M14.3 25.5h20M14.3 32.7h20M14.3 39.8h20"/><circle cx="24.5" cy="25.5" r="1.6" fill="#343537"/><circle cx="28" cy="32.7" r="1.6" fill="#343537"/><circle cx="21.5" cy="39.8" r="1.6" fill="#343537"/></g></svg>
<svg class="a" style="left:2px;top:548px" width="49" height="61" viewBox="0 0 49 61"><rect x="15" y="23.5" width="7.8" height="7.5" fill="#d9552c"/><circle cx="28.7" cy="27.2" r="3.9" fill="#4aab9c"/><rect x="15" y="33.4" width="7.8" height="7.5" fill="#78b44a"/><rect x="24.8" y="33.4" width="7.8" height="7.5" fill="#e39a32"/></svg>
<svg class="a" style="left:2px;top:1040px" width="49" height="30" viewBox="0 0 49 30"><g fill="none" stroke="#a8a8a8" stroke-width="1.6"><path d="M14 6h20M14 13.3h6M14 20.3h6"/><circle cx="26" cy="16" r="4.3"/><path d="M29.3 19.3l3.2 3.2"/></g></svg>
<svg class="a" style="left:55px;top:5px" width="40" height="40" viewBox="0 0 40 40"><rect x="14.1" y="17.6" width="18.6" height="13.7" fill="none" stroke="#444" stroke-width="1.7"/><g fill="none" stroke="#444" stroke-width="1"><path d="M17.4 18.2a2.8 2.8 0 0 1-2.8 2.8"/><path d="M29.4 18.2a2.8 2.8 0 0 0 2.8 2.8"/><path d="M17.4 30.7a2.8 2.8 0 0 0-2.8-2.8"/><path d="M29.4 30.7a2.8 2.8 0 0 1 2.8-2.8"/></g><path d="M20.6 20.6l2.8 3 2.8-3M23.4 23.6v5M20.3 24.3h6.2M20.3 26.4h6.2" fill="none" stroke="#444" stroke-width="1.5"/></svg>
<svg class="a" style="left:176px;top:21px" width="16" height="16" viewBox="0 0 16 16"><path d="M2 2l12.5 12.5M14.5 2L2 14.5" stroke="#9a9a9a" stroke-width="1.4"/></svg>

</body></html>
